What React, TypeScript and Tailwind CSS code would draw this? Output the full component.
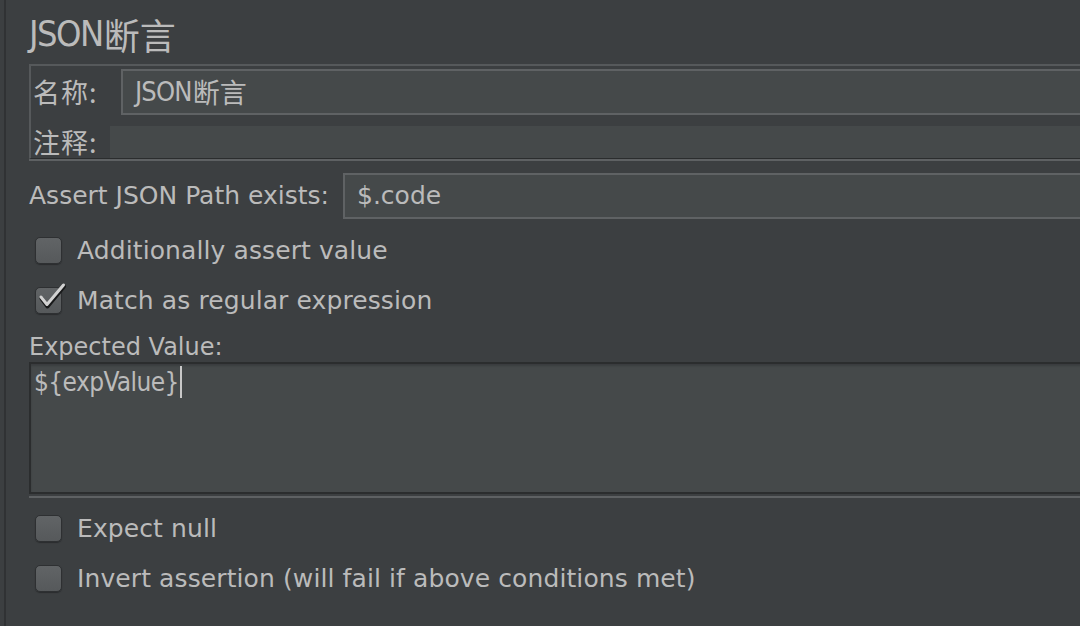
import React from "react";

const CJK = "font-['Noto_Sans_CJK_SC',sans-serif]";
const COND = "font-['DejaVu_Sans_Condensed','DejaVu_Sans','Noto_Sans_CJK_SC',sans-serif]";

function Checkbox({ checked }: { checked?: boolean }) {
  return (
    <div className="relative w-[27px] h-[27px] shrink-0 rounded-[5px] border border-[#2e3032] bg-linear-to-b from-[#616466] to-[#56595b] shadow-[0_1px_1px_#2a2c2e]">
      {checked && (
        <svg
          className="absolute left-[-1px] top-[-6px]"
          width="32"
          height="30"
          viewBox="0 0 32 30"
          fill="none"
        >
          <path
            d="M6.5 16.5 L12.5 24.5 L29 4.5"
            stroke="#18191a"
            strokeWidth="4"
            strokeLinecap="round"
            strokeLinejoin="round"
          />
          <path
            d="M6 15 L12 22.5 L28.5 3"
            stroke="#d2d2d2"
            strokeWidth="3"
            strokeLinecap="round"
            strokeLinejoin="round"
          />
        </svg>
      )}
    </div>
  );
}

function CheckRow({ checked, label, className }: { checked?: boolean; label: string; className: string }) {
  return (
    <div className={"flex items-center h-[27px] pl-[6px] " + className}>
      <Checkbox checked={checked} />
      <span className="ml-[15px] whitespace-nowrap leading-[27px] tracking-[0.1px]">{label}</span>
    </div>
  );
}

export default function App() {
  return (
    <div className="w-[1080px] h-[626px] overflow-hidden bg-[#3c3f41] flex text-[#bbbbbb] font-['DejaVu_Sans','Noto_Sans_CJK_SC',sans-serif] text-[25px]">
      <div className="w-[4px] shrink-0" />
      <div className="w-[2px] shrink-0 bg-[#303234]" />
      <div className="w-[1100px] shrink-0 pl-[23px] flex flex-col">
        {/* Title */}
        <div className="h-[64px] pt-[3px] flex items-center whitespace-nowrap text-[#bbbbbb]">
          <span className={COND + " text-[36px] tracking-[-1.5px]"}>JSON</span>
          <span className={CJK + " text-[36px] ml-[1px]"}>断言</span>
        </div>

        {/* Name / comment panel */}
        <div className="border-b-2 border-[#5e6163]">
          <div className="border-t-2 border-l-2 border-[#56595b] border-b border-b-[#2b2d2e] pl-[2px] pt-[3px]">
            <div className="flex h-[46px]">
              <div className={CJK + " w-[88px] shrink-0 flex items-center text-[27px] tracking-[1px]"}>名称:</div>
              <div className="flex-1 border-2 border-[#5f6264] bg-[#45494a] pl-[12px] flex items-center whitespace-nowrap">
                <span className={COND + " text-[27px] tracking-[-0.8px]"}>JSON</span>
                <span className={CJK + " text-[27px] ml-[1px]"}>断言</span>
              </div>
            </div>
            <div className="flex h-[32px] mt-[11px]">
              <div className={CJK + " w-[77px] shrink-0 flex items-center text-[27px] tracking-[1px]"}>注释:</div>
              <div className="flex-1 bg-[#45494a]" />
            </div>
          </div>
        </div>

        {/* Assert JSON Path */}
        <div className="flex h-[46px] mt-[12px]">
          <div className="w-[314px] shrink-0 flex items-center whitespace-nowrap">Assert JSON Path exists:</div>
          <div className="flex-1 border-2 border-[#5f6264] bg-[#45494a] pl-[12px] flex items-center">$.code</div>
        </div>

        <CheckRow label="Additionally assert value" className="mt-[18px]" />
        <CheckRow checked label="Match as regular expression" className="mt-[23px]" />

        <div className="mt-[18px] h-[30px] leading-[30px] text-[24px] whitespace-nowrap">Expected Value:</div>

        <div className="border-b-2 border-[#5e6163] pb-[2px]">
          <div className="h-[132px] border-2 border-[#2b2d2e] bg-[#45494a] shadow-[inset_0_2px_2px_#3a3d3f] pl-[3px] pt-[1px]">
            <div className="flex items-center h-[34px]">
              <span className={COND + " text-[26px] tracking-[-0.6px] leading-[34px]"}>{"${expValue}"}</span>
              <span className="w-[2px] h-[32px] bg-[#c8c8c8] ml-[1px]" />
            </div>
          </div>
        </div>

        <CheckRow label="Expect null" className="mt-[17px]" />
        <CheckRow label="Invert assertion (will fail if above conditions met)" className="mt-[23px]" />
      </div>
    </div>
  );
}
